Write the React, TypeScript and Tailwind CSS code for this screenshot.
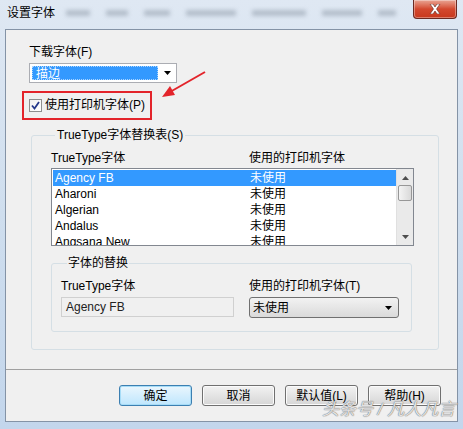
import React from "react";

const font = { fontFamily: '"Liberation Sans", "Noto Sans CJK SC", sans-serif' };

const rows = ["Agency FB", "Aharoni", "Algerian", "Andalus", "Angsana New"];

function Btn({ label, primary }: { label: string; primary?: boolean }) {
  return (
    <div
      className={
        "w-[73px] h-[21px] flex items-center justify-center rounded-[3px] text-[12px] text-black border " +
        (primary
          ? "border-[#3c7fb1] bg-gradient-to-b from-[#eaf6fd] to-[#bee6fd] shadow-[inset_0_0_0_1px_#a6dcf7]"
          : "border-[#707070] bg-gradient-to-b from-[#f2f2f2] to-[#d6d6d6] shadow-[inset_0_0_0_1px_#fbfbfb]")
      }
    >
      {label}
    </div>
  );
}

function Arrow({ up }: { up?: boolean }) {
  return (
    <div className="h-[17px] flex items-center justify-center">
      <svg width="7" height="4" viewBox="0 0 7 4">
        {up ? <path d="M0 4 L3.5 0 L7 4 Z" fill="#4d4d4d" /> : <path d="M0 0 L3.5 4 L7 0 Z" fill="#4d4d4d" />}
      </svg>
    </div>
  );
}

export default function App() {
  return (
    <div
      className="relative w-[463px] h-[429px] bg-gradient-to-b from-[#dfe8f3] via-[#cfdeee] to-[#c3d6ec] flex flex-col overflow-hidden text-[12px] text-black"
      style={font}
    >
      {/* title bar */}
      <div className="relative h-[29px] flex items-start justify-between">
        <div className="absolute left-[66px] top-[10px] flex gap-[16px] blur-[2px] opacity-50">
          <div className="w-[24px] h-[6px] bg-[#8a96a4]" />
          <div className="w-[22px] h-[6px] bg-[#8a96a4]" />
          <div className="w-[26px] h-[6px] bg-[#8a96a4]" />
          <div className="w-[50px] h-[6px] bg-[#8a96a4]" />
          <div className="w-[54px] h-[6px] bg-[#8a96a4]" />
          <div className="w-[40px] h-[6px] bg-[#8a96a4]" />
          <div className="w-[18px] h-[6px] bg-[#8a96a4]" />
        </div>
        <div className="relative pl-[7px] pt-[4px] text-[12px] text-black">设置字体</div>
        <div className="relative mr-[6px] w-[44px] h-[19px] rounded-b-[4px] border border-t-0 border-[#6b2a22] bg-gradient-to-b from-[#e8a493] via-[#d3482e] to-[#c8381c] flex items-center justify-center shadow-[inset_0_0_0_1px_rgba(255,255,255,0.35)]">
          <svg width="12" height="10" viewBox="0 0 12 10">
            <path d="M1 0 L4 0 L6 3 L8 0 L11 0 L7.5 5 L11 10 L8 10 L6 7 L4 10 L1 10 L4.5 5 Z" fill="#fff" stroke="#5a2a22" strokeWidth="0.6" />
          </svg>
        </div>
      </div>

      {/* content panel */}
      <div className="ml-[5px] mr-[5px] h-[393px] bg-[#f0f0f0] border border-[#8493a6] flex flex-col">
        <div className="pl-[23px] pt-[15px] leading-[15px]">下载字体(F)</div>
        <div className="ml-[23px] mt-[3px] w-[148px] h-[20px] bg-white border border-[#abadb3] flex items-center">
          <div className="ml-[2px] w-[126px] h-[14px] bg-[#3399ff] text-white leading-[14px] pl-[3px] border border-dotted border-[#aad4ff]">描边</div>
          <div className="flex-1 flex justify-center">
            <svg width="7" height="4" viewBox="0 0 7 4"><path d="M0 0 L3.5 4 L7 0 Z" fill="#000" /></svg>
          </div>
        </div>

        <div className="ml-[16px] mt-[8px] w-[130px] h-[29px] border-2 border-[#e3242b] flex items-center pl-[5px] gap-[3px]">
          <div className="w-[13px] h-[13px] border border-[#8e8f8f] bg-gradient-to-br from-[#f0f0f0] to-[#ffffff] flex items-center justify-center">
            <svg width="9" height="9" viewBox="0 0 9 9">
              <path d="M1 4.5 L3.5 7.5 L8 1" fill="none" stroke="#23378a" strokeWidth="1.8" />
            </svg>
          </div>
          <span className="leading-[15px]">使用打印机字体(P)</span>
        </div>

        <fieldset className="ml-[25px] mt-[8px] w-[408px] h-[222px] border border-[#d5dfe5] rounded-[3px] pl-[19px] pr-[24px]">
          <legend className="ml-[4px] px-[2px] leading-[15px]">TrueType字体替换表(S)</legend>
          <div className="flex mt-[8px] leading-[15px]">
            <div className="w-[198px]">TrueType字体</div>
            <div>使用的打印机字体</div>
          </div>
          <div className="mt-[2px] w-[363px] h-[78px] bg-white border border-[#828790] flex">
            <div className="flex-1 overflow-hidden pt-[1px] pl-[1px]">
              {rows.map((r, i) => (
                <div
                  key={r}
                  className={"flex h-[16px] leading-[16px] " + (i === 0 ? "bg-[#3399ff] text-white" : "")}
                >
                  <div className="w-[197px] pl-[2px]">{r}</div>
                  <div>未使用</div>
                </div>
              ))}
            </div>
            <div className="w-[17px] bg-[#eaeaea] border-l border-[#e0e0e0] flex flex-col justify-between">
              <div>
                <Arrow up />
                <div className="mx-[1px] h-[16px] -mt-[1px] rounded-[2px] border border-[#979797] bg-gradient-to-r from-[#f4f4f4] to-[#d9d9d9]" />
              </div>
              <Arrow />
            </div>
          </div>

          <fieldset className="mt-[10px] w-[361px] h-[76px] border border-[#d5dfe5] rounded-[3px] pl-[9px]">
            <legend className="ml-[6px] px-[1px] leading-[15px]">字体的替换</legend>
            <div className="flex mt-[8px] leading-[15px]">
              <div className="w-[188px]">TrueType字体</div>
              <div>使用的打印机字体(T)</div>
            </div>
            <div className="flex mt-[3px]">
              <div className="w-[173px] h-[20px] border border-[#d0d0d0] bg-[#f0f0f0] leading-[18px] pl-[4px] text-[#222]">Agency FB</div>
              <div className="ml-[15px] w-[150px] h-[21px] rounded-[3px] border border-[#707070] bg-gradient-to-b from-[#f2f2f2] to-[#dadada] flex items-center justify-between pl-[3px] pr-[6px]">
                <span>未使用</span>
                <svg width="7" height="4" viewBox="0 0 7 4"><path d="M0 0 L3.5 4 L7 0 Z" fill="#000" /></svg>
              </div>
            </div>
          </fieldset>
        </fieldset>

        <div className="mt-[19px] h-px bg-[#a0a0a0]" />

        <div className="relative mt-[15px] flex gap-[10px] pl-[113px]">
          <Btn label="确定" primary />
          <Btn label="取消" />
          <Btn label="默认值(L)" />
          <Btn label="帮助(H)" />
        </div>
      </div>

      {/* watermark */}
      <div
        className="absolute left-[322px] top-[400px] text-[17px] leading-[20px] italic text-white/80"
        style={{ textShadow: "0 0 1px #6b6b6b, 0 0 1px #6b6b6b" }}
      >
        头条号 / 凡人凡言
      </div>

      {/* red arrow */}
      <svg className="absolute left-0 top-0 pointer-events-none" width="463" height="429">
        <line x1="205" y1="72" x2="170" y2="92" stroke="#e3242b" strokeWidth="2" />
        <path d="M162 97 L170 86 L175 95 Z" fill="#e3242b" />
      </svg>
    </div>
  );
}
